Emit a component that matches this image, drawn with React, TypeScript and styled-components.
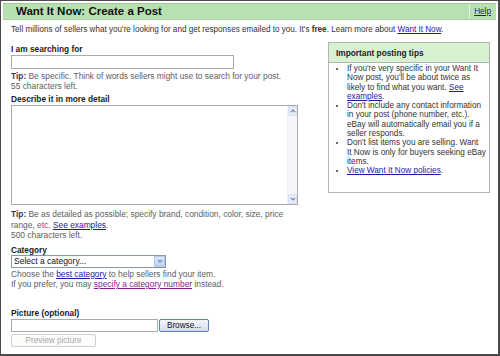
import React from "react";
import styled, { createGlobalStyle } from "styled-components";

const Global = createGlobalStyle`
  html, body { margin: 0; padding: 0; background: #fff; }
  body { font-family: "Liberation Sans", Arial, sans-serif; color: #333; }
  * { box-sizing: border-box; }
`;

const Page = styled.div`
  width: 500px;
  height: 356px;
  border: 1px solid #4a4a4a;
  border-right-width: 2px;
  border-bottom-width: 2px;
  padding: 2px 2px 0 2px;
  overflow: hidden;
`;

const Header = styled.div`
  display: flex;
  align-items: stretch;
  height: 17px;
  background: #b9e0b0;
  border-top: 1px solid #9ccc92;
  border-bottom: 1px solid #a6d39c;
`;

const Title = styled.h1`
  flex: 1;
  margin: 0;
  padding-left: 13px;
  font-size: 11.5px;
  line-height: 15px;
  font-weight: bold;
  color: #111;
`;

const HelpCell = styled.div`
  display: flex;
  align-items: center;
  padding: 0 5px 0 4px;
  border-left: 1px solid #e4f3df;
  font-size: 8.2px;
`;

const Link = styled.a<{ $visited?: boolean }>`
  color: ${(p) => (p.$visited ? "#8a1a9a" : "#1a1aa6")};
  text-decoration: underline;
  cursor: pointer;
`;

const Intro = styled.p`
  margin: 5px 0 0 8px;
  font-size: 8.15px;
  line-height: 10px;
  color: #333;
`;

const Row = styled.div`
  display: flex;
  align-items: flex-start;
  margin-top: 7px;
  padding-left: 8px;
`;

const Main = styled.div`
  width: 300px;
  display: flex;
  flex-direction: column;
  align-items: flex-start;
`;

const Label = styled.div<{ $mt: number }>`
  margin-top: ${(p) => p.$mt}px;
  font-size: 8.3px;
  line-height: 10px;
  font-weight: bold;
  color: #222;
`;

const Help = styled.div<{ $mt: number; $lh?: number }>`
  margin-top: ${(p) => p.$mt}px;
  font-size: 8.4px;
  line-height: ${(p) => p.$lh ?? 9.5}px;
  color: #5e5e5e;
  width: 292px;
  b { color: #3a3a3a; }
`;

const TextInput = styled.div<{ $w: number; $h: number; $mt: number }>`
  width: ${(p) => p.$w}px;
  height: ${(p) => p.$h}px;
  margin-top: ${(p) => p.$mt}px;
  border: 1px solid #a5acb2;
  background: #fff;
`;

const AreaBox = styled.div`
  display: flex;
  width: 287px;
  height: 100px;
  margin-top: 1px;
  border: 1px solid #a5acb2;
  background: #fff;
`;

const AreaField = styled.div`
  flex: 1;
`;

const ScrollTrack = styled.div`
  width: 10px;
  display: flex;
  flex-direction: column;
  justify-content: space-between;
  background: #f4f6fb;
  border-left: 1px solid #eef0f6;
`;

const ScrollBtn = styled.div`
  height: 10px;
  display: flex;
  align-items: center;
  justify-content: center;
  background: #e6ecf7;
  border: 1px solid #d8e0ee;
  border-radius: 1px;
`;

const SelectBox = styled.div`
  display: flex;
  align-items: stretch;
  width: 155px;
  height: 13px;
  border: 1px solid #7f9db9;
  background: #fff;
`;

const SelectText = styled.div`
  flex: 1;
  padding-left: 2px;
  font-size: 8.5px;
  line-height: 11px;
  color: #111;
`;

const SelectBtn = styled.div`
  width: 11px;
  display: flex;
  align-items: center;
  justify-content: center;
  background: linear-gradient(#dfe8fb, #c0d2f4);
  border: 1px solid #b6c8ea;
`;

const FileRow = styled.div`
  display: flex;
  align-items: center;
  margin-top: 1px;
  gap: 1px;
`;

const BrowseBtn = styled.div`
  width: 50px;
  height: 13px;
  display: flex;
  align-items: center;
  justify-content: center;
  font-size: 8.2px;
  color: #111;
  background: linear-gradient(#f2f5fb, #d5deee);
  border: 1px solid #5f7eb3;
  border-radius: 2px;
`;

const PreviewBtn = styled.div`
  margin-top: 2px;
  width: 85px;
  height: 13px;
  display: flex;
  align-items: center;
  justify-content: center;
  font-size: 8.2px;
  color: #a9a9a9;
  border: 1px solid #cfcfcf;
  border-radius: 2px;
  background: #fbfbfb;
`;

const Aside = styled.div`
  margin-left: 17px;
  width: 162px;
  border: 1px solid #b4b4b4;
  background: #fff;
`;

const AsideHead = styled.div`
  height: 20px;
  padding-left: 7px;
  display: flex;
  align-items: center;
  font-size: 8.3px;
  font-weight: bold;
  color: #222;
  background: #d8f1d0;
  border-bottom: 1px solid #b4b4b4;
`;

const Tips = styled.ul`
  margin: 1px 0 0 0;
  padding: 0 0 16px 18px;
  font-size: 8.2px;
  line-height: 9.3px;
  color: #333;
  li { margin: 0; }
`;

const Arrow = ({ d }: { d: string }) => (
  <svg width="6" height="4" viewBox="0 0 6 4">
    <path d={d} fill="none" stroke="#6b86b8" strokeWidth="1.1" />
  </svg>
);

export default function App() {
  return (
    <>
      <Global />
      <Page>
        <Header>
          <Title>Want It Now: Create a Post</Title>
          <HelpCell>
            <Link>Help</Link>
          </HelpCell>
        </Header>
        <Intro>
          Tell millions of sellers what you're looking for and get responses emailed to you. It's{" "}
          <b>free</b>. Learn more about <Link>Want It Now</Link>.
        </Intro>
        <Row>
          <Main>
            <Label $mt={2}>I am searching for</Label>
            <TextInput $w={223} $h={14} $mt={1} />
            <Help $mt={3}>
              <b>Tip:</b> Be specific. Think of words sellers might use to search for your post.
              <br />
              55 characters left.
            </Help>
            <Label $mt={3}>Describe it in more detail</Label>
            <AreaBox>
              <AreaField />
              <ScrollTrack>
                <ScrollBtn>
                  <Arrow d="M1 3 L3 1 L5 3" />
                </ScrollBtn>
                <ScrollBtn>
                  <Arrow d="M1 1 L3 3 L5 1" />
                </ScrollBtn>
              </ScrollTrack>
            </AreaBox>
            <Help $mt={4} $lh={10.5}>
              <b>Tip:</b> Be as detailed as possible; specify brand, condition, color, size, price
              range, etc. <Link>See examples</Link>.
              <br />
              500 characters left.
            </Help>
            <Label $mt={4}>Category</Label>
            <SelectBox>
              <SelectText>Select a category...</SelectText>
              <SelectBtn>
                <Arrow d="M1 1 L3 3 L5 1" />
              </SelectBtn>
            </SelectBox>
            <Help $mt={1} $lh={10.5}>
              Choose the <Link>best category</Link> to help sellers find your item.
              <br />
              If you prefer, you may <Link $visited>specify a category number</Link> instead.
            </Help>
            <Label $mt={18}>Picture (optional)</Label>
            <FileRow>
              <TextInput $w={147} $h={13} $mt={0} />
              <BrowseBtn>Browse...</BrowseBtn>
            </FileRow>
            <PreviewBtn>Preview picture</PreviewBtn>
          </Main>
          <Aside>
            <AsideHead>Important posting tips</AsideHead>
            <Tips>
              <li>
                If you're very specific in your Want It Now post, you'll be about twice as likely to
                find what you want. <Link>See examples</Link>.
              </li>
              <li>
                Don't include any contact information in your post (phone number, etc.). eBay will
                automatically email you if a seller responds.
              </li>
              <li>
                Don't list items you are selling. Want It{"\u00a0"}Now is only for buyers seeking eBay
                items.
              </li>
              <li>
                <Link>View Want It Now policies</Link>.
              </li>
            </Tips>
          </Aside>
        </Row>
      </Page>
    </>
  );
}
